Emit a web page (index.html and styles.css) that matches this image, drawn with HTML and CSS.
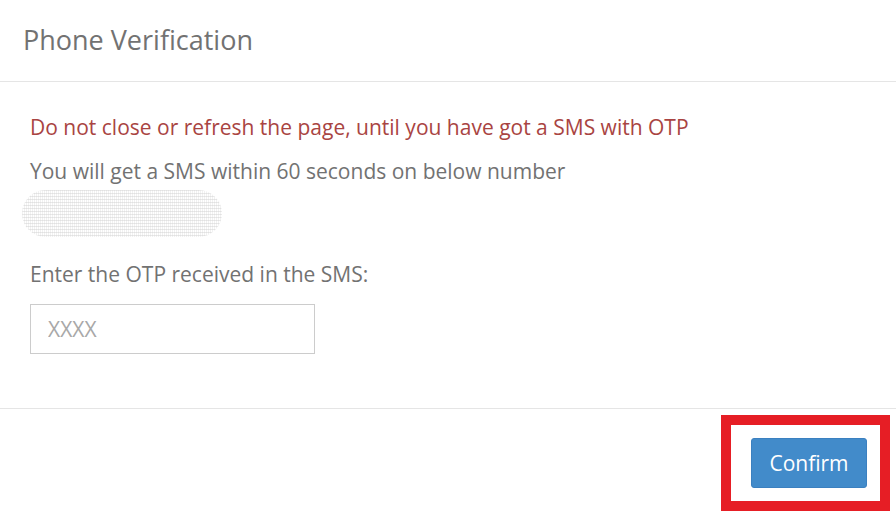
FILE: index.html
```html
<!DOCTYPE html>
<html>
<head>
<meta charset="utf-8">
<link rel="stylesheet" href="styles.css">
</head>
<body>
<div class="modal">
  <div class="modal-header">
    <h4 class="modal-title">Phone Verification</h4>
  </div>
  <div class="modal-body">
    <p class="warn">Do not close or refresh the page, until you have got a SMS with OTP</p>
    <p class="info">You will get a SMS within 60 seconds on below number</p>
    <div class="redacted"></div>
    <label class="otp-label">Enter the OTP received in the SMS:</label>
    <input class="otp-input" type="text" placeholder="XXXX">
  </div>
  <div class="modal-footer">
    <div class="highlight">
      <button class="btn-confirm">Confirm</button>
    </div>
  </div>
</div>
</body>
</html>
```
FILE: styles.css
```css
html, body {
  margin: 0;
  padding: 0;
  background: #ffffff;
}
body {
  font-family: "Open Sans", "Noto Sans", sans-serif;
  color: #6f6f6f;
  width: 896px;
  height: 515px;
  overflow: hidden;
}
.modal {
  display: flex;
  flex-direction: column;
  height: 515px;
}
.modal-header {
  height: 82px;
  box-sizing: border-box;
  border-bottom: 1px solid #e5e5e5;
  padding: 25px 23px 0 23px;
}
.modal-title {
  margin: 0;
  font-size: 27px;
  font-weight: 400;
  color: #727272;
  line-height: 30px;
}
.modal-body {
  height: 327px;
  box-sizing: border-box;
  border-bottom: 1px solid #e5e5e5;
  padding: 30px 30px 0 30px;
  display: flex;
  flex-direction: column;
  align-items: flex-start;
}
.warn {
  margin: 0;
  font-size: 21px;
  line-height: 30px;
  color: #a94442;
}
.info {
  margin: 14px 0 0 0;
  font-size: 21px;
  line-height: 30px;
  color: #727272;
}
.redacted {
  margin: 4px 0 0 -8px;
  width: 200px;
  height: 47px;
  border-radius: 24px;
  background:
    repeating-linear-gradient(180deg, rgba(190,190,190,0.45) 0 1px, rgba(255,255,255,0) 1px 3px),
    repeating-linear-gradient(90deg, rgba(215,215,215,0.45) 0 1px, rgba(255,255,255,0) 1px 2px);
  opacity: 0.75;
}
.otp-label {
  margin-top: 22px;
  font-size: 21px;
  line-height: 30px;
  color: #727272;
}
.otp-input {
  margin-top: 15px;
  width: 285px;
  height: 50px;
  box-sizing: border-box;
  border: 1px solid #cccccc;
  border-radius: 0;
  padding: 0 17px;
  font-family: "Open Sans", "Noto Sans", sans-serif;
  font-size: 21px;
  color: #555;
  outline: none;
}
.otp-input::placeholder {
  color: #a8a8a8;
}
.modal-footer {
  flex: 1;
  display: flex;
  justify-content: flex-end;
  align-items: flex-start;
  padding: 6px 6px 0 0;
}
.highlight {
  width: 169px;
  height: 96px;
  box-sizing: border-box;
  border: 10px solid #e61e25;
  padding: 13px 13px 0 20px;
}
.btn-confirm {
  display: block;
  width: 116px;
  height: 50px;
  background: #428bca;
  border: 1px solid #3b80c0;
  border-radius: 3px;
  color: #ffffff;
  font-family: "Open Sans", "Noto Sans", sans-serif;
  font-size: 21px;
  padding: 0;
}
```
